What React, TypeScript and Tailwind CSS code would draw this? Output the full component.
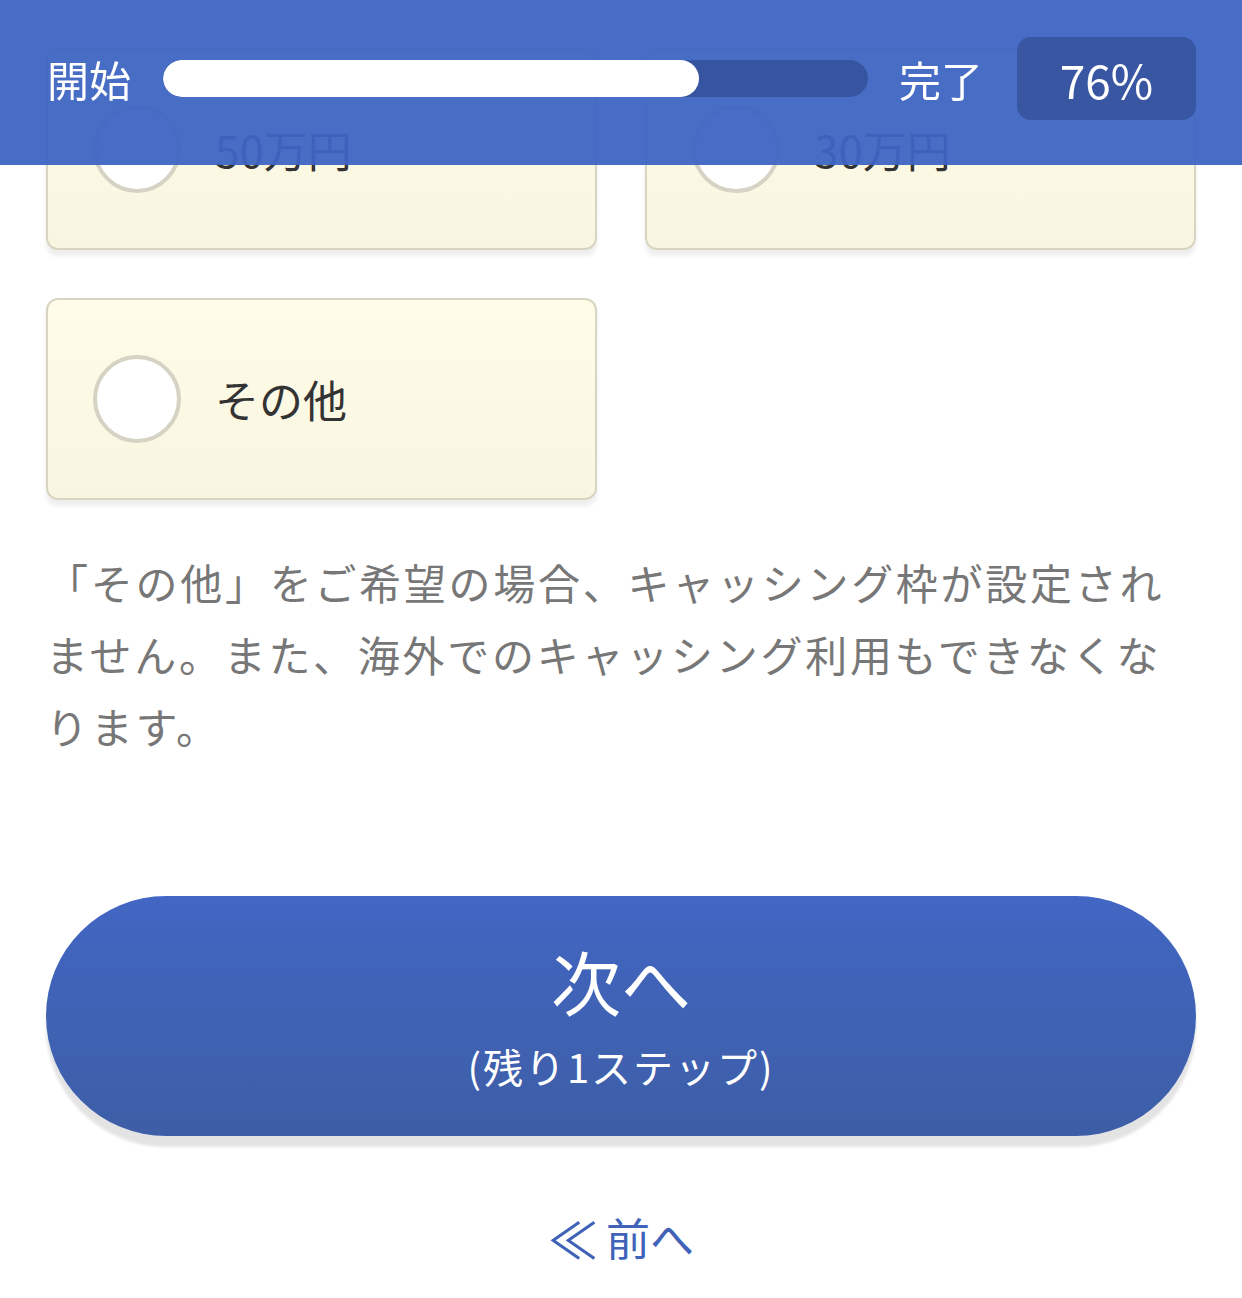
import React from "react";

const options = [
  { label: "50万円" },
  { label: "30万円" },
  { label: "その他" },
];

function RadioCard({ label }: { label: string }) {
  return (
    <label className="flex h-[202px] cursor-pointer items-center rounded-[12px] border-2 border-[#d8d4c2] bg-gradient-to-b from-[#fffce8] to-[#f8f5e0] pl-[45px] shadow-[0_6px_4px_rgba(0,0,0,0.07)]">
      <span className="h-[88px] w-[88px] shrink-0 rounded-full border-[4px] border-[#d6d3c5] bg-white" />
      <span className="ml-[34px] text-[44px] leading-none text-[#333333]">{label}</span>
    </label>
  );
}

export default function App() {
  const progress = 76;

  return (
    <div className="relative min-h-[1298px] w-full bg-white font-['Noto_Sans_CJK_JP','Noto_Sans',sans-serif]">
      {/* Progress header */}
      <header className="fixed inset-x-0 top-0 z-10 flex h-[165px] items-center bg-[#3e65c3]/95 pb-2 pl-[47px] pr-[46px]">
        <span className="text-[42px] leading-none text-white">開始</span>
        <div className="ml-[32px] h-[37px] flex-1 overflow-hidden rounded-full bg-[#3654a0]">
          <div className="h-full rounded-full bg-white" style={{ width: `${progress}%` }} />
        </div>
        <span className="ml-[31px] text-[42px] leading-none text-white">完了</span>
        <div className="ml-[34px] flex h-[83px] w-[179px] items-center justify-center rounded-[14px] bg-[#3856a2] text-[46px] leading-none text-white">
          {progress}%
        </div>
      </header>

      <main className="px-[46px] pt-[48px]">
        <div className="grid grid-cols-2 gap-x-[48px] gap-y-[48px]">
          {options.map((o) => (
            <RadioCard key={o.label} label={o.label} />
          ))}
        </div>

        <p className="mt-[46px] text-[42px] leading-[72px] tracking-[0.065em] text-[#777777]">
          「その他」をご希望の場合、キャッシング枠が設定されません。また、海外でのキャッシング利用もできなくなります。
        </p>

        <button className="mt-[134px] flex h-[240px] w-full flex-col items-center justify-center rounded-full bg-gradient-to-b from-[#4266c3] to-[#3d5ea6] text-white shadow-[0_11px_3px_rgba(0,0,0,0.11)]">
          <span className="text-[70px] leading-none">次へ</span>
          <span className="mt-[30px] text-[40px] leading-none tracking-[0.05em]">(残り1ステップ)</span>
        </button>

        <div className="mt-[71px] flex justify-center">
          <a href="#" className="flex items-center text-[44px] leading-[60px] text-[#4063b8]">
            <span className="mr-[8px] text-[50px]">≪</span>
            <span>前へ</span>
          </a>
        </div>
      </main>
    </div>
  );
}
